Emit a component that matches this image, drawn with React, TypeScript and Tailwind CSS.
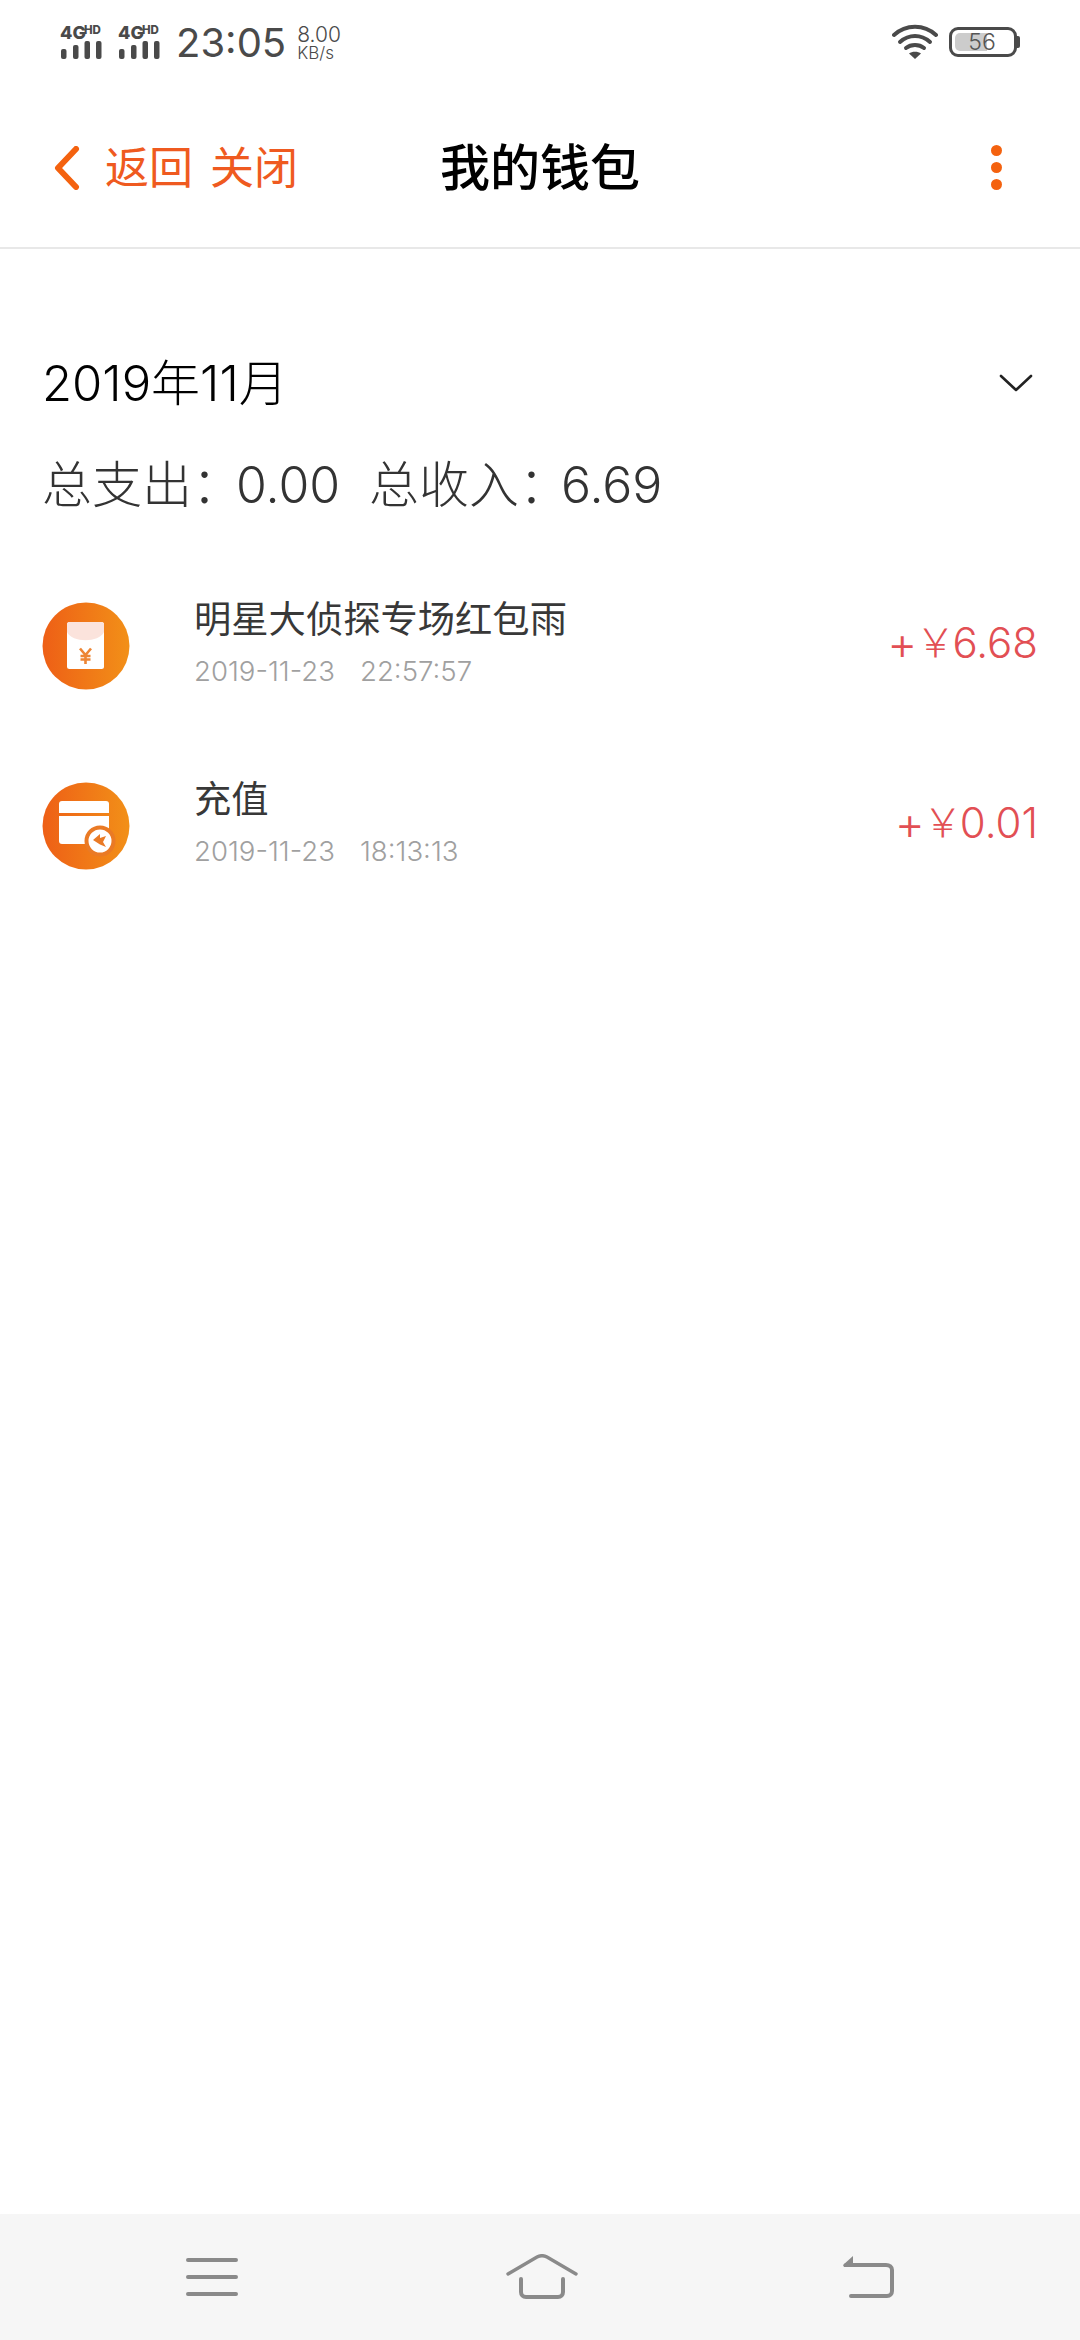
import React from "react";

const SANS = "font-['Inter','Noto_Sans_CJK_SC','Noto_Sans',sans-serif]";

function Signal() {
  return (
    <svg width="46" height="36" viewBox="0 0 46 36" className="block overflow-visible">
      <text x="0" y="14.5" fontFamily="Inter" fontWeight="800" fontSize="18" fill="#4a4a4a">4G</text>
      <text x="24" y="10" fontFamily="Inter" fontWeight="800" fontSize="11.5" fill="#4a4a4a">HD</text>
      <rect x="1" y="25" width="5.5" height="10" rx="2" fill="#4a4a4a" />
      <rect x="13" y="21" width="5.5" height="14" rx="2" fill="#4a4a4a" />
      <rect x="24.5" y="17" width="5.5" height="18" rx="2" fill="#4a4a4a" />
      <rect x="36" y="17" width="5.5" height="18" rx="2" fill="#4a4a4a" />
    </svg>
  );
}

function Wifi() {
  return (
    <svg width="46" height="36" viewBox="0 0 46 36" fill="none" className="block">
      <path d="M2 11C14 0 32 0 44 11" stroke="#4a4a4a" strokeWidth="4" strokeLinecap="round" />
      <path d="M8 18C17 10 29 10 38 18" stroke="#4a4a4a" strokeWidth="4" strokeLinecap="round" />
      <path d="M14 24C19 20 27 20 32 24" stroke="#4a4a4a" strokeWidth="4" strokeLinecap="round" />
      <path d="M17 29.5C20 27 26 27 29 29.5L23 35Z" fill="#4a4a4a" />
    </svg>
  );
}

function Battery() {
  return (
    <div className="flex items-center">
      <div className="relative w-[68px] h-[30px] rounded-[9px] border-[3px] border-[#4a4a4a] overflow-hidden">
        <div className="absolute left-[3px] top-[3px] bottom-[3px] w-[32px] bg-[#cccccc] rounded-l-[5px]" />
        <span className="absolute inset-0 flex items-center justify-center pr-[2px] text-[#555555] text-[23px] leading-none font-['Inter',sans-serif] font-light">56</span>
      </div>
      <div className="w-[3px] h-[12px] bg-[#4a4a4a] rounded-r-[2px]" />
    </div>
  );
}

function RedPacketIcon() {
  return (
    <svg width="88" height="88" viewBox="0 0 88 88" className="block shrink-0">
      <defs>
        <linearGradient id="g1" x1="0" y1="0" x2="1" y2="0">
          <stop offset="0" stopColor="#ee5f16" />
          <stop offset="1" stopColor="#f29018" />
        </linearGradient>
      </defs>
      <circle cx="44" cy="44" r="43.5" fill="url(#g1)" />
      <rect x="25" y="20" width="37" height="47" rx="2.5" fill="#ffffff" />
      <path d="M25 22.5a2.5 2.5 0 0 1 2.5-2.5h32a2.5 2.5 0 0 1 2.5 2.5V30C57 41 30 41 25 30Z" fill="#fbe3dc" />
      <path d="M38 46.5L43.5 53L49 46.5M38.5 54H48.5M38.5 57.5H48.5M43.5 53V62" stroke="#ed8534" strokeWidth="2.6" fill="none" />
    </svg>
  );
}

function TopUpIcon() {
  return (
    <svg width="88" height="88" viewBox="0 0 88 88" className="block shrink-0">
      <defs>
        <linearGradient id="g2" x1="0" y1="0" x2="1" y2="0">
          <stop offset="0" stopColor="#ee5f16" />
          <stop offset="1" stopColor="#f29018" />
        </linearGradient>
      </defs>
      <circle cx="44" cy="44" r="43.5" fill="url(#g2)" />
      <path d="M17 22a3 3 0 0 1 3-3h44a3 3 0 0 1 3 3V31H17Z" fill="#ffffff" />
      <path d="M17 34H67V62H20a3 3 0 0 1-3-3Z" fill="#ffffff" />
      <circle cx="58" cy="59" r="13.5" fill="#ffffff" stroke="#ea7a25" strokeWidth="4" />
      <path d="M51 58L58 52V56L64 54L61 60L64 65L58 62.5Z" fill="#ea7a25" />
    </svg>
  );
}

function Row({ icon, title, time, clock, amount }: { icon: React.ReactNode; title: string; time: string; clock: string; amount: string }) {
  return (
    <div className="flex items-center h-[180px] pl-[42px] pr-[42px]">
      {icon}
      <div className="flex-1 ml-[64px] flex flex-col -mt-[6px]">
        <div className="text-[37.3px] leading-[44px] text-[#383838]">{title}</div>
        <div className="text-[27.6px] leading-[34px] mt-[12px] text-[#a0a0a0] font-light flex">
          <span className="w-[166px]">{time}</span>
          <span>{clock}</span>
        </div>
      </div>
      <div className="flex items-center text-[42px] leading-none text-[#e24f54] font-light -mt-[6px]">
        <span className="text-[46px]">+</span>
        <span className="text-[40px] -ml-[2px] -mr-[3px]">￥</span>
        <span>{amount}</span>
      </div>
    </div>
  );
}

export default function App() {
  return (
    <div className={`w-[1080px] h-[2340px] bg-white flex flex-col overflow-hidden ${SANS}`}>
      <div className="h-[70px] flex items-center justify-between pl-[60px] pr-[60px] pt-[14px] shrink-0">
        <div className="flex items-center">
          <div className="flex gap-[12px]">
            <Signal />
            <Signal />
          </div>
          <span className="ml-[12px] mt-[2px] text-[40px] leading-none text-[#4a4a4a] font-normal">23:05</span>
          <div className="ml-[11px] mt-[2px] flex flex-col text-[#4a4a4a] font-light">
            <span className="text-[21px] leading-[21px]">8.00</span>
            <span className="text-[17px] leading-[17px]">KB/s</span>
          </div>
        </div>
        <div className="flex items-center gap-[11px]">
          <Wifi />
          <Battery />
        </div>
      </div>

      <div className="relative h-[179px] shrink-0 border-b-2 border-[#e8e8e8] flex items-center justify-between pl-[54px] pr-[78px] pt-[18px]">
        <div className="flex items-center">
          <svg width="26" height="44" viewBox="0 0 26 44" fill="none" className="block">
            <path d="M22 3L4 22L22 41" stroke="#f4620f" strokeWidth="6" strokeLinecap="round" strokeLinejoin="round" />
          </svg>
          <span className="ml-[25px] text-[#ef5a20] text-[44px] leading-none font-normal whitespace-pre">返回</span>
          <span className="ml-[17px] text-[#ef5a20] text-[44px] leading-none font-normal whitespace-pre">关闭</span>
        </div>
        <div className="absolute left-0 right-0 top-[18px] bottom-0 flex items-center justify-center pointer-events-none">
          <span className="text-[50px] leading-none text-black font-medium">我的钱包</span>
        </div>
        <div className="flex flex-col gap-[6px]">
          <div className="w-[11px] h-[11px] rounded-full bg-[#f4620f]" />
          <div className="w-[11px] h-[11px] rounded-full bg-[#f4620f]" />
          <div className="w-[11px] h-[11px] rounded-full bg-[#f4620f]" />
        </div>
      </div>

      <div className="flex items-center justify-between h-[60px] mt-[104px] pl-[42px] pr-[47px] shrink-0">
        <span className="text-[49px] leading-none text-black font-light">2019年11月</span>
        <svg width="34" height="20" viewBox="0 0 34 20" fill="none" className="block">
          <path d="M2 3L17 17L32 3" stroke="#222222" strokeWidth="2.6" strokeLinecap="round" strokeLinejoin="round" />
        </svg>
      </div>

      <div className="mt-[42px] pl-[42px] h-[60px] flex items-center text-[50px] leading-none text-[#333333] font-light shrink-0 whitespace-pre">
        <span className="w-[194px]">总支出：</span>
        <span className="w-[133px]">0.00</span>
        <span className="w-[192px]">总收入：</span>
        <span>6.69</span>
      </div>

      <div className="mt-[41px] flex flex-col shrink-0">
        <Row icon={<RedPacketIcon />} title="明星大侦探专场红包雨" time="2019-11-23" clock="22:57:57" amount="6.68" />
        <Row icon={<TopUpIcon />} title="充值" time="2019-11-23" clock="18:13:13" amount="0.01" />
      </div>

      <div className="flex-1" />

      <div className="h-[126px] bg-[#f6f6f6] shrink-0 flex items-center justify-between pl-[186px] pr-[186px]">
        <svg width="52" height="40" viewBox="0 0 52 40" fill="none" className="block">
          <path d="M2 3H50M2 20H50M2 37H50" stroke="#8a8a8a" strokeWidth="4" strokeLinecap="round" />
        </svg>
        <svg width="72" height="46" viewBox="0 0 72 46" fill="none" className="block ml-[3px]">
          <path d="M2 20L31 3C34 1.4 38 1.4 41 3L70 20" stroke="#8a8a8a" strokeWidth="3.4" strokeLinecap="round" />
          <path d="M15 25V38C15 41 17 43 20 43H52C55 43 57 41 57 38V25" stroke="#8a8a8a" strokeWidth="4" strokeLinecap="round" />
        </svg>
        <svg width="52" height="44" viewBox="0 0 52 44" fill="none" className="block">
          <path d="M4 10H44C47.5 10 50 12 50 15V36C50 39 48 41 45 41H9" stroke="#8a8a8a" strokeWidth="4" strokeLinecap="round" />
          <path d="M1 10L11 1V12H2Z" fill="#8a8a8a" />
        </svg>
      </div>
    </div>
  );
}
